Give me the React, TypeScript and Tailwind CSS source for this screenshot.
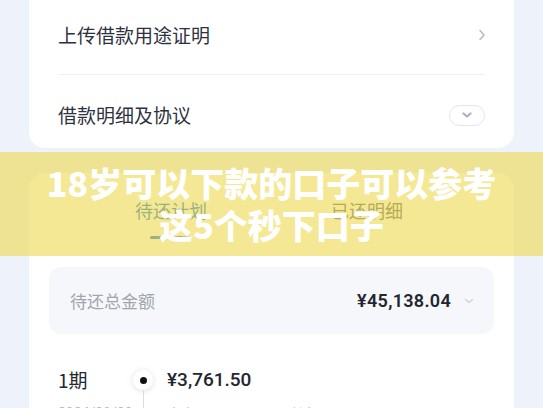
import { ReactNode } from 'react';

const CJK = '"Noto Sans CJK SC", "Noto Sans", sans-serif';
const NUM = 'Roboto, "Noto Sans CJK SC", sans-serif';

function ChevronRight() {
  return (
    <svg width="8" height="12" viewBox="0 0 8 12" fill="none">
      <path d="M2 1.5L6 6L2 10.5" stroke="#b9bdca" strokeWidth="1.6" strokeLinecap="round" strokeLinejoin="round" />
    </svg>
  );
}

function ChevronDown({ color, w = 10, sw = 2 }: { color: string; w?: number; sw?: number }) {
  return (
    <svg width={w} height={w * 0.6} viewBox="0 0 10 6" fill="none">
      <path d="M1.5 1.5L5 4.5L8.5 1.5" stroke={color} strokeWidth={sw} strokeLinecap="round" strokeLinejoin="round" />
    </svg>
  );
}

function Row({ children, right, className }: { children: ReactNode; right: ReactNode; className: string }) {
  return (
    <div className={`flex items-center justify-between ${className}`}>
      <span className="text-[19px] leading-[26px] text-[#2e3140]">{children}</span>
      {right}
    </div>
  );
}

export default function App() {
  return (
    <div className="relative h-[408px] w-[543px] overflow-hidden bg-[#eef2fb]" style={{ fontFamily: CJK }}>
      {/* 上方卡片 */}
      <div className="mx-[29px] h-[148px] rounded-b-[16px] bg-white px-[29px]">
        <Row className="h-[74px] pb-[4px]" right={<span className="-mr-[1px]"><ChevronRight /></span>}>
          上传借款用途证明
        </Row>
        <div className="h-px bg-[#eceef3]" />
        <Row
          className="h-[73px] pt-[7px]"
          right={
            <span className="flex h-[21px] w-[36px] items-center justify-center rounded-full border border-[#e2e5ee] bg-white">
              <ChevronDown color="#a9aec0" w={10} sw={2.2} />
            </span>
          }
        >
          借款明细及协议
        </Row>
      </div>

      {/* 还款计划卡片 */}
      <div className="mx-[29px] mt-[25px] h-[300px] rounded-t-[16px] bg-white px-[20px]">
        <div className="flex pl-[86px] pt-[24px]">
          <div className="flex flex-col items-center">
            <span className="text-[18px] leading-[26px] text-[#1e78c8]">待还计划</span>
            <span className="mt-[13px] h-[3px] w-[42px] rounded-full bg-[#1e78c8]" />
          </div>
          <span className="ml-[124px] text-[18px] leading-[26px] text-[#666666]">已还明细</span>
        </div>

        <div className="mt-[28px] flex h-[67px] items-center justify-between rounded-[12px] bg-[#f6f7fa] pl-[21px] pr-[20px]">
          <span className="text-[17px] text-[#a2a5af]">待还总金额</span>
          <div className="flex items-center gap-[13px]">
            <span className="text-[18px] font-semibold tracking-[0.3px] text-[#23262f]" style={{ fontFamily: NUM }}>
              ¥45,138.04
            </span>
            <ChevronDown color="#cfd2da" w={10} sw={1.4} />
          </div>
        </div>

        <div className="mt-[33px] flex pl-[9px]">
          <div className="flex w-[74px] flex-col">
            <span className="flex h-[26px] items-center text-[19px] text-[#23262f]">1期</span>
            <span className="mt-[10px] text-[14px] text-[#b2b5bf]" style={{ fontFamily: NUM }}>2024/08/20</span>
          </div>
          <div className="flex w-[22px] flex-col items-center">
            <span className="mt-[3px] flex h-[20px] w-[20px] items-center justify-center rounded-full bg-white shadow-[0_1px_6px_rgba(40,50,80,0.15)]">
              <span className="h-[7px] w-[7px] rounded-full bg-[#111]" />
            </span>
            <span className="h-[40px] w-px bg-[#d9dce4]" />
          </div>
          <div className="ml-[13px] flex flex-col">
            <span className="flex h-[26px] items-center text-[19px] font-medium text-[#23262f]" style={{ fontFamily: NUM }}>
              ¥3,761.50
            </span>
            <span className="mt-[10px] text-[14px] text-[#b2b5bf]">本金 ¥3,271.00　　利息 ¥490.50</span>
          </div>
        </div>
      </div>

      {/* 标题横幅 */}
      <div className="absolute left-0 right-0 top-[152px] flex h-[104px] flex-col items-center justify-center bg-[rgba(238,216,78,0.6)]">
        <p className="text-[34px] font-black leading-[42px] text-white">18岁可以下款的口子可以参考</p>
        <p className="text-[34px] font-black leading-[42px] text-white">这5个秒下口子</p>
      </div>
    </div>
  );
}
